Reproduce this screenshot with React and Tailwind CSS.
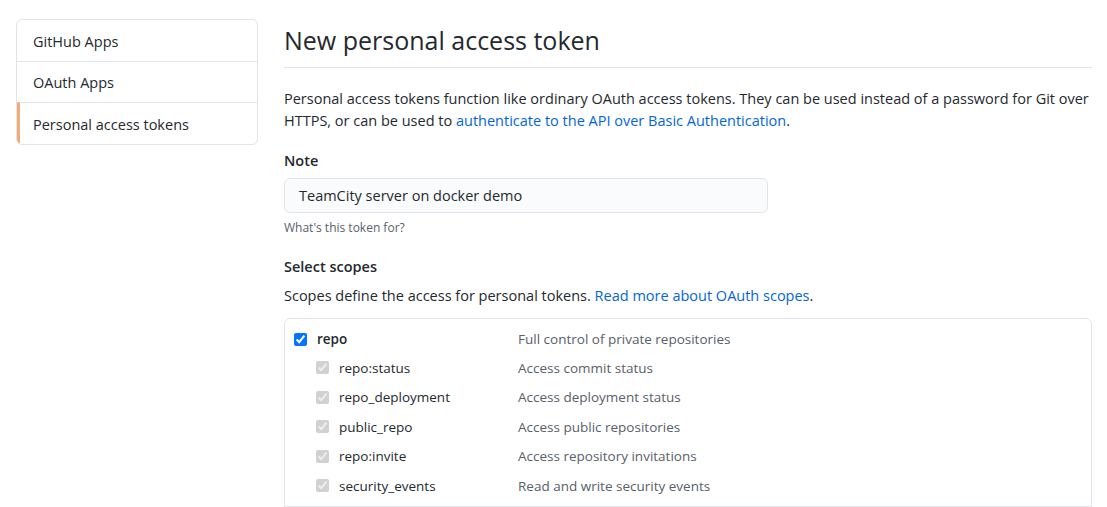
import React from 'react';

const navItems = [
  { label: 'GitHub Apps', active: false },
  { label: 'OAuth Apps', active: false },
  { label: 'Personal access tokens', active: true },
];

const subScopes = [
  { name: 'repo:status', desc: 'Access commit status' },
  { name: 'repo_deployment', desc: 'Access deployment status' },
  { name: 'public_repo', desc: 'Access public repositories' },
  { name: 'repo:invite', desc: 'Access repository invitations' },
  { name: 'security_events', desc: 'Read and write security events' },
];

const App = () => {
  return (
    <div className="flex w-[1107px] h-[507px] overflow-hidden bg-white text-[#24292e] font-['Open_Sans',sans-serif] text-[14.5px]">
      {/* sidebar */}
      <div className="w-[242px] ml-4 mt-[19px] shrink-0">
        <div className="border border-[#e1e4e8] rounded-md overflow-hidden">
          {navItems.map((item, i) => (
            <div
              key={item.label}
              className={`h-[41px] flex items-center pl-4 pt-[2px] ${i > 0 ? 'border-t border-[#e1e4e8]' : ''} ${item.active ? 'border-l-[3px] border-l-[#f2ab76] pl-[13px] h-[42px] pt-[3px]' : ''}`}
            >
              {item.label}
            </div>
          ))}
        </div>
      </div>

      {/* main */}
      <div className="ml-[26px] w-[808px] shrink-0">
        <div className="mt-[25px] pb-[12px] border-b border-[#e1e4e8]">
          <h1 className="text-[25px] leading-[30px] font-normal">New personal access token</h1>
        </div>

        <p className="mt-[20px] leading-[22px]">
          Personal access tokens function like ordinary OAuth access tokens. They can be used instead of a password for Git over HTTPS, or can be used to{' '}
          <a className="text-[#0366d6]">authenticate to the API over Basic Authentication</a>.
        </p>

        <div className="mt-[18px] font-semibold leading-[22px]">Note</div>
        <div className="mt-[6px] w-[484px] h-[35px] bg-[#fafbfc] border border-[#e1e4e8] rounded-md flex items-center px-[14px]">
          TeamCity server on docker demo
        </div>
        <div className="mt-[6px] text-[12px] text-[#586069] leading-[18px]">What's this token for?</div>

        <div className="mt-[19px] font-semibold leading-[22px]">Select scopes</div>
        <p className="mt-[7px] leading-[22px]">
          Scopes define the access for personal tokens.{' '}
          <a className="text-[#0366d6]">Read more about OAuth scopes</a>.
        </p>

        <div className="mt-[11px] border border-[#e1e4e8] rounded-t-md pt-[9px] text-[13.5px]">
          <div className="flex items-center h-[22px]">
            <div className="w-[233px] flex items-center pl-[9px]">
              <input type="checkbox" checked readOnly className="w-[13px] h-[13px] m-0 accent-[#0075ff]" />
              <span className="ml-[10px] font-semibold">repo</span>
            </div>
            <span className="text-[#586069]">Full control of private repositories</span>
          </div>
          <div className="pt-[3px] pb-[5px]">
            {subScopes.map((s) => (
              <div key={s.name} className="flex items-center h-[29.5px]">
                <div className="w-[233px] flex items-center pl-[31px]">
                  <input type="checkbox" checked disabled readOnly className="w-[13px] h-[13px] m-0" />
                  <span className="ml-[10px]">{s.name}</span>
                </div>
                <span className="text-[#586069]">{s.desc}</span>
              </div>
            ))}
          </div>
          <div className="border-t border-[#e1e4e8] h-[40px]" />
        </div>
      </div>
    </div>
  );
};

export default App;
